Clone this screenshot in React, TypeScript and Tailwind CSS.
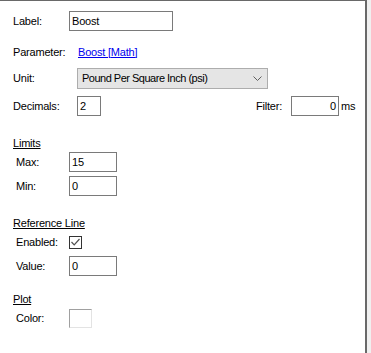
const Field = ({ w, value, right }: { w: string; value: string; right?: boolean }) => (
  <div
    className={`${w} h-[20px] border border-[#7a7a7a] bg-white flex items-center px-[2px] ${
      right ? "justify-end" : ""
    }`}
  >
    <span>{value}</span>
  </div>
);

const Section = ({ title, mt }: { title: string; mt: string }) => (
  <div className={`${mt} h-[14px] flex items-center`}>
    <span className="underline underline-offset-[1px]">{title}</span>
  </div>
);

const App = () => {
  return (
    <div className="flex w-[371px] h-[353px] bg-[#f0f0f0] text-[11px] tracking-[-0.2px] text-black font-['Liberation_Sans',Arial,sans-serif]">
      <div className="w-[367px] h-full bg-white border-t border-r-2 border-[#696969] pl-[13px]">
        {/* label */}
        <div className="mt-[10px] h-[20px] flex items-center">
          <span className="w-[56px]">Label:</span>
          <Field w="w-[104px]" value="Boost" />
        </div>

        {/* parameter */}
        <div className="mt-[11px] h-[20px] flex items-center">
          <span className="w-[65px]">Parameter:</span>
          <a className="text-[#0000ee] underline underline-offset-[1px] cursor-pointer">Boost [Math]</a>
        </div>

        {/* unit */}
        <div className="mt-[6px] h-[21px] flex items-center">
          <span className="w-[64px]">Unit:</span>
          <div className="w-[191px] h-[21px] bg-[#e5e5e5] border border-[#adadad] flex items-center justify-between pl-[4px] pr-[5px]">
            <span className="tracking-[-0.5px]">Pound Per Square Inch (psi)</span>
            <svg width="9" height="6" viewBox="0 0 9 6" fill="none">
              <path d="M0.5 0.5 L4.5 4.5 L8.5 0.5" stroke="#606060" strokeWidth="1" />
            </svg>
          </div>
        </div>

        {/* decimals + filter */}
        <div className="mt-[7px] h-[20px] flex items-center">
          <span className="w-[64px]">Decimals:</span>
          <Field w="w-[24px]" value="2" />
          <span className="ml-[155px] w-[35px]">Filter:</span>
          <Field w="w-[48px]" value="0" right />
          <span className="ml-[2px]">ms</span>
        </div>

        <Section title="Limits" mt="mt-[20px]" />
        <div className="mt-[2px] h-[20px] flex items-center pl-[3px]">
          <span className="w-[53px]">Max:</span>
          <Field w="w-[48px]" value="15" />
        </div>
        <div className="mt-[4px] h-[20px] flex items-center pl-[3px]">
          <span className="w-[53px]">Min:</span>
          <Field w="w-[48px]" value="0" />
        </div>

        <Section title="Reference Line" mt="mt-[20px]" />
        <div className="mt-[2px] h-[20px] flex items-center pl-[3px]">
          <span className="w-[53px]">Enabled:</span>
          <div className="w-[13px] h-[13px] border border-[#333333] bg-white flex items-center justify-center">
            <svg width="9" height="8" viewBox="0 0 9 8" fill="none">
              <path d="M0.5 4 L3.2 6.8 L8.5 1" stroke="#505050" strokeWidth="1.2" />
            </svg>
          </div>
        </div>
        <div className="mt-[4px] h-[20px] flex items-center pl-[3px]">
          <span className="w-[53px]">Value:</span>
          <Field w="w-[48px]" value="0" />
        </div>

        <Section title="Plot" mt="mt-[16px]" />
        <div className="mt-[2px] h-[20px] flex items-center pl-[3px]">
          <span className="w-[53px]">Color:</span>
          <div className="w-[23px] h-[19px] bg-white border-t border-l border-t-[#a0a0a0] border-l-[#a0a0a0] border-r border-b border-r-[#e3e3e3] border-b-[#e3e3e3]" />
        </div>
      </div>
    </div>
  );
};

export default App;
